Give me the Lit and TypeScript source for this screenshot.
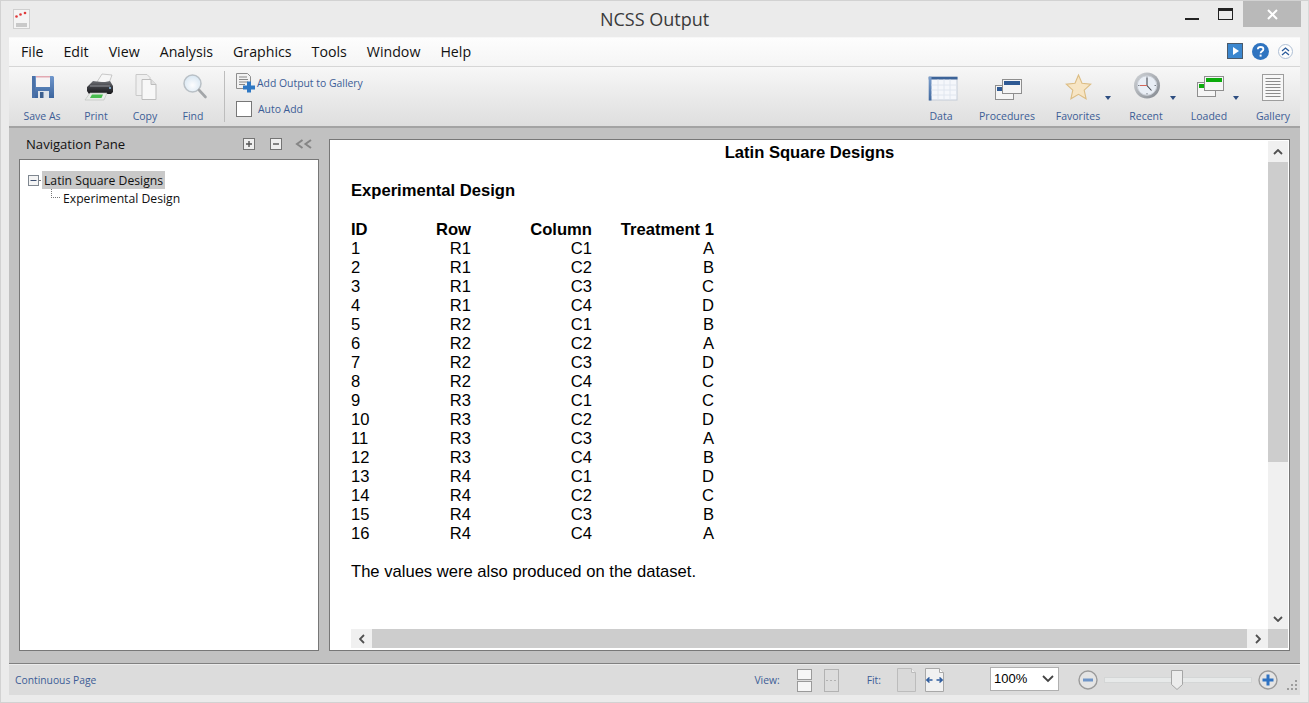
import { LitElement, css, html, svg } from "lit";
import { customElement } from "lit/decorators.js";

const MENUS = ["File", "Edit", "View", "Analysis", "Graphics", "Tools", "Window", "Help"];

const ROWS = [
  [1, "R1", "C1", "A"], [2, "R1", "C2", "B"], [3, "R1", "C3", "C"], [4, "R1", "C4", "D"],
  [5, "R2", "C1", "B"], [6, "R2", "C2", "A"], [7, "R2", "C3", "D"], [8, "R2", "C4", "C"],
  [9, "R3", "C1", "C"], [10, "R3", "C2", "D"], [11, "R3", "C3", "A"], [12, "R3", "C4", "B"],
  [13, "R4", "C1", "D"], [14, "R4", "C2", "C"], [15, "R4", "C3", "B"], [16, "R4", "C4", "A"],
];

const icons = {
  save: svg`<svg width="30" height="30" viewBox="0 0 30 30">
    <defs><linearGradient id="sv" x1="0" y1="0" x2="0" y2="1"><stop offset="0" stop-color="#7097cc"/><stop offset="1" stop-color="#3c659e"/></linearGradient></defs>
    <path d="M4 4h21l1 1v21H4z" fill="url(#sv)"/><path d="M4 4h3v22H4z" fill="#4a71a8"/>
    <rect x="8" y="4" width="14" height="11" fill="#f6f3f4"/><rect x="8" y="4" width="14" height="1.500" fill="#e2a9b2"/>
    <rect x="10" y="19" width="11" height="7" fill="#dfe4ea"/><rect x="12" y="20" width="3.500" height="6" fill="#3c5f8f"/>
  </svg>`,
  print: svg`<svg width="32" height="30" viewBox="0 0 32 30">
    <defs><linearGradient id="pr" x1="0" y1="0" x2="0" y2="1"><stop offset="0" stop-color="#6f7176"/><stop offset=".5" stop-color="#3a3b40"/><stop offset="1" stop-color="#17171a"/></linearGradient></defs>
    <path d="M14 10L19 2l10 1-3 8z" fill="#f6f6f6" stroke="#b5b5b5" stroke-width=".7"/>
    <path d="M4 15l6-6 8 1 4 0 5-1 3 5v6l-2 2H6l-2-3z" fill="url(#pr)"/>
    <path d="M7 14h20" stroke="#8f9197"/>
    <path d="M7 21h17l-3 7H2z" fill="#e9ece9" stroke="#b8bcb8" stroke-width=".6"/><path d="M9 22.500h11l-1.500 3.500H7z" fill="#49bd50"/>
    <circle cx="27" cy="16" r="1" fill="#8fc0e8"/>
  </svg>`,
  copy: svg`<svg width="26" height="30" viewBox="0 0 26 30">
    <path d="M2.500 2.500h11l3 3v18h-14z" fill="#efefef" stroke="#c9c9c9"/>
    <path d="M8.500 7.500h9l5 5v15h-14z" fill="#f7f7f7" stroke="#bdbdbd"/>
    <path d="M17.500 7.500v5h5" fill="#e0e0e0" stroke="#bdbdbd"/>
  </svg>`,
  find: svg`<svg width="28" height="30" viewBox="0 0 28 30">
    <defs><radialGradient id="fd" cx=".5" cy=".6" r=".6"><stop offset="0" stop-color="#fdfdfe"/><stop offset="1" stop-color="#d7e6f2"/></radialGradient></defs>
    <circle cx="12" cy="11" r="8.500" fill="url(#fd)" stroke="#b9c0c6" stroke-width="1.500"/>
    <path d="M18.500 17.500l6.500 7" stroke="#a3a6a9" stroke-width="2.600" stroke-linecap="round"/>
  </svg>`,
  addOutput: svg`<svg width="20" height="20" viewBox="0 0 20 20">
    <path d="M.5 .5h11l3 3v12H.5z" fill="#f2f2f2" stroke="#8d8d8d"/>
    <path d="M3 4h8M3 6.500h9M3 9h9M3 11.500h6" stroke="#888"/>
    <path d="M10 9h4v4h4v4h-4v3h-4v-3H6v-4h4z" fill="#2f78c4" transform="translate(1 -.5)"/>
  </svg>`,
  data: svg`<svg width="30" height="26" viewBox="0 0 30 26">
    <defs><linearGradient id="dt" x1="0" y1="0" x2="0" y2="1"><stop offset="0" stop-color="#7da0ce"/><stop offset="1" stop-color="#41699f"/></linearGradient></defs>
    <rect x=".5" y=".5" width="28" height="23" fill="#f5f7fb" stroke="#c4ccd8"/>
    <rect x="0" y="0" width="29" height="3" fill="#3c6398"/><rect x="0" y="0" width="3" height="24" fill="url(#dt)"/>
    <path d="M9.500 3v20M15.500 3v20M21.500 3v20M3 8.500h25M3 13.500h25M3 18.500h25" stroke="#e0e6ef"/>
  </svg>`,
  procedures: svg`<svg width="28" height="22" viewBox="0 0 28 22">
    <rect x=".5" y="6.500" width="18" height="14" fill="#f5f5f5" stroke="#8e8e8e"/><rect x="2" y="8" width="6" height="4" fill="#2f5a94"/>
    <rect x="7.500" y=".5" width="19" height="14" fill="#f5f5f5" stroke="#8e8e8e"/><rect x="9" y="2" width="16" height="4" fill="#2f5a94"/>
  </svg>`,
  loaded: svg`<svg width="28" height="22" viewBox="0 0 28 22">
    <rect x=".5" y="6.500" width="18" height="14" fill="#f5f5f5" stroke="#8e8e8e"/><rect x="2" y="8" width="6" height="4" fill="#0cab0c"/>
    <rect x="7.500" y=".5" width="19" height="14" fill="#f5f5f5" stroke="#8e8e8e"/><rect x="9" y="2" width="16" height="4" fill="#0cab0c"/>
  </svg>`,
  star: svg`<svg width="28" height="27" viewBox="0 0 28 27">
    <path d="M14 1.500l3.500 8.300 8.700.9-6.500 5.900 1.900 8.700L14 20.800l-7.600 4.500 1.900-8.700-6.500-5.900 8.700-.9z" fill="#f7e5c4" stroke="#dcbd84" stroke-width="1.100"/>
  </svg>`,
  clock: svg`<svg width="28" height="28" viewBox="0 0 28 28">
    <defs><linearGradient id="ck" x1="0" y1="0" x2="1" y2="1"><stop offset="0" stop-color="#d3d6da"/><stop offset="1" stop-color="#81868d"/></linearGradient></defs>
    <circle cx="14" cy="14" r="13" fill="url(#ck)"/><circle cx="14" cy="14" r="9.800" fill="#e9eef5" stroke="#c9ced6"/>
    <path d="M14 6.500V14l4.500 5" fill="none" stroke="#454a52" stroke-width="1.100"/><path d="M14 14H7" stroke="#d2675a"/>
    <path d="M14 5v1.500M14 21.500V23M5 14h1.500M21.500 14H23" stroke="#7b8089"/>
  </svg>`,
  gallery: svg`<svg width="22" height="27" viewBox="0 0 22 27">
    <rect x=".5" y=".5" width="21" height="26" fill="#f7f7f7" stroke="#9d9d9d"/>
    <path d="M3.500 4.500h15M3.500 7.500h15M3.500 10.500h15M3.500 13.500h15M3.500 16.500h15M3.500 19.500h15M3.500 22.500h15" stroke="#8b8b8b"/>
  </svg>`,
  arrow: svg`<svg width="6" height="4" viewBox="0 0 6 4"><path d="M0 0h6L3 4z" fill="#2d4d80"/></svg>`,
  app: svg`<svg width="17" height="20" viewBox="0 0 17 20">
    <rect x=".5" y=".5" width="16" height="19" fill="#f4f4f4" stroke="#cfcfcf"/>
    <rect x="3" y="14" width="11" height="4" fill="#c9c9c9"/>
    <circle cx="3.500" cy="7.500" r="1.300" fill="#e03a3a"/><circle cx="7.500" cy="5.500" r="1.300" fill="#e03a3a"/><circle cx="12" cy="4" r="1.300" fill="#e03a3a"/>
  </svg>`,
  play: svg`<svg width="16" height="16" viewBox="0 0 16 16">
    <rect x=".5" y=".5" width="15" height="15" fill="#3b87cf" stroke="#4b5a6a"/><path d="M6 4l6 4-6 4z" fill="#fff"/>
  </svg>`,
  help: svg`<svg width="17" height="17" viewBox="0 0 17 17">
    <circle cx="8.500" cy="8.500" r="8.500" fill="#2f74c0"/>
    <path d="M5.800 6.300c.2-3.100 5.600-3.100 5.600 0 0 2-2.800 2-2.800 4" fill="none" stroke="#fff" stroke-width="1.800"/>
    <rect x="7.600" y="11.600" width="2" height="2" fill="#fff"/>
  </svg>`,
  collapse: svg`<svg width="15" height="15" viewBox="0 0 15 15">
    <circle cx="7.500" cy="7.500" r="7" fill="#fdfdfd" stroke="#aebfd4"/>
    <path d="M4 7l3.500-3L11 7M4 11l3.500-3L11 11" fill="none" stroke="#2c5c9c" stroke-width="1.300"/>
  </svg>`,
  plusBox: svg`<svg width="12" height="12" viewBox="0 0 12 12">
    <rect x=".5" y=".5" width="11" height="11" fill="#efefef" stroke="#747474"/><path d="M3 6h6M6 3v6" stroke="#555" stroke-width="1.400"/>
  </svg>`,
  minusBox: svg`<svg width="12" height="12" viewBox="0 0 12 12">
    <rect x=".5" y=".5" width="11" height="11" fill="#efefef" stroke="#747474"/><path d="M3 6h6" stroke="#555" stroke-width="1.400"/>
  </svg>`,
  back: svg`<svg width="18" height="10" viewBox="0 0 18 10">
    <path d="M7.500 1L2 5l5.500 4M16 1l-5.500 4 5.500 4" fill="none" stroke="#858585" stroke-width="2"/>
  </svg>`,
  treeMinus: svg`<svg width="11" height="11" viewBox="0 0 11 11">
    <rect x=".5" y=".5" width="10" height="10" fill="#f4f4f4" stroke="#7f8790"/><path d="M2.500 5.500h6" stroke="#3d4f70"/>
  </svg>`,
  up: svg`<svg width="10" height="6" viewBox="0 0 10 6"><path d="M1 5l4-4 4 4" fill="none" stroke="#505050" stroke-width="1.800"/></svg>`,
  down: svg`<svg width="10" height="6" viewBox="0 0 10 6"><path d="M1 1l4 4 4-4" fill="none" stroke="#505050" stroke-width="1.800"/></svg>`,
  left: svg`<svg width="6" height="10" viewBox="0 0 6 10"><path d="M5 1L1 5l4 4" fill="none" stroke="#505050" stroke-width="1.800"/></svg>`,
  right: svg`<svg width="6" height="10" viewBox="0 0 6 10"><path d="M1 1l4 4-4 4" fill="none" stroke="#505050" stroke-width="1.800"/></svg>`,
  viewStack: svg`<svg width="15" height="23" viewBox="0 0 15 23">
    <rect x=".5" y=".5" width="14" height="10" fill="#f6f6f6" stroke="#9a9a9a"/><rect x=".5" y="12.500" width="14" height="10" fill="#f6f6f6" stroke="#9a9a9a"/>
  </svg>`,
  viewCont: svg`<svg width="15" height="23" viewBox="0 0 15 23">
    <rect x=".5" y=".5" width="14" height="22" fill="#dcdcdc" stroke="#b2b2b2"/><path d="M2 11.500h11" stroke="#b2b2b2" stroke-dasharray="2 2"/>
  </svg>`,
  fitPage: svg`<svg width="19" height="24" viewBox="0 0 19 24">
    <path d="M.5 .5h14l4 4v19H.5z" fill="#d9d9d9" stroke="#bcbcbc"/><path d="M14.500 .5v4h4" fill="#efefef" stroke="#bcbcbc"/>
  </svg>`,
  fitWidth: svg`<svg width="19" height="24" viewBox="0 0 19 24">
    <path d="M.5 .5h14l4 4v19H.5z" fill="#f1f1f1" stroke="#a8a8a8"/><path d="M14.500 .5v4h4" fill="#fafafa" stroke="#a8a8a8"/>
    <path d="M1.500 12h6M4.500 9.500L1.800 12l2.700 2.500M17.500 12h-6M14.500 9.500l2.700 2.500-2.700 2.500" fill="none" stroke="#2e5c9e" stroke-width="1.500"/>
  </svg>`,
  zoomOut: svg`<svg width="20" height="20" viewBox="0 0 20 20">
    <circle cx="10" cy="10" r="9" fill="#e4e4e4" stroke="#9b9b9b" stroke-width="1.400"/><rect x="5" y="8.500" width="10" height="3" fill="#6f95c8"/>
  </svg>`,
  zoomIn: svg`<svg width="20" height="20" viewBox="0 0 20 20">
    <circle cx="10" cy="10" r="9" fill="#e4e4e4" stroke="#9b9b9b" stroke-width="1.400"/><path d="M4.500 8.500h4v-4h3v4h4v3h-4v4h-3v-4h-4z" fill="#2f72c2"/>
  </svg>`,
  thumb: svg`<svg width="12" height="20" viewBox="0 0 12 20">
    <path d="M.5 .5h11v14L6 19.500.5 14.500z" fill="#ececec" stroke="#a5a5a5"/>
  </svg>`,
  chevron: svg`<svg width="12" height="8" viewBox="0 0 12 8"><path d="M1 1l5 5 5-5" fill="none" stroke="#444" stroke-width="1.800"/></svg>`,
  grip: svg`<svg width="10" height="10" viewBox="0 0 10 10">
    <path d="M8 0h2v2H8zM4 4h2v2H4zM8 4h2v2H8zM0 8h2v2H0zM4 8h2v2H4zM8 8h2v2H8z" fill="#9c9c9c"/>
  </svg>`,
};

type Tool = { label: string; icon: unknown; width: number; dx: number; dy: number; menu?: number };

const LEFT_TOOLS: Tool[] = [
  { label: "Save As", icon: icons.save, width: 54, dx: 1, dy: -1 },
  { label: "Print", icon: icons.print, width: 54, dx: 3, dy: -1 },
  { label: "Copy", icon: icons.copy, width: 44, dx: 1.500, dy: -1 },
  { label: "Find", icon: icons.find, width: 52, dx: 1.500, dy: -.500 },
];

const RIGHT_TOOLS: Tool[] = [
  { label: "Data", icon: icons.data, width: 50, dx: 2.500, dy: 1.500 },
  { label: "Procedures", icon: icons.procedures, width: 82, dx: 2, dy: 2 },
  { label: "Favorites", icon: icons.star, width: 60, dx: .500, dy: -1.500, menu: -3 },
  { label: "Recent", icon: icons.clock, width: 76, dx: 1, dy: -2.500, menu: 8 },
  { label: "Loaded", icon: icons.loaded, width: 50, dx: 2, dy: -1, menu: -5 },
  { label: "Gallery", icon: icons.gallery, width: 46, dx: 0, dy: -1 },
];

@customElement("app-root")
export class AppRoot extends LitElement {
  static styles = css`
    :host {
      display: block;
      width: 1309px;
      height: 703px;
      overflow: hidden;
      font-family: "Open Sans", "Noto Sans", sans-serif;
    }
    .win {
      box-sizing: border-box;
      height: 703px;
      display: flex;
      flex-direction: column;
      background: #ebebeb;
      border: 1px solid #d2d2d2;
      border-right-color: #d8d8d8;
      padding: 0 8px 7px 8px;
    }
    svg {
      display: block;
    }
    .titlebar {
      height: 36px;
      flex: none;
      position: relative;
      display: flex;
      align-items: center;
      justify-content: center;
      font-size: 18px;
      color: #3a3a3a;
      box-sizing: border-box;
    }
    .app-icon {
      position: absolute;
      left: 4px;
      top: 8px;
    }
    .win-btns {
      position: absolute;
      right: -1px;
      top: 0;
      display: flex;
      align-items: flex-start;
    }
    .min {
      width: 14px;
      height: 2px;
      background: #222;
      margin: 17px 19px 0 0;
    }
    .max {
      box-sizing: border-box;
      width: 15px;
      height: 12px;
      border: 1px solid #222;
      border-top-width: 3px;
      margin: 7px 10px 0 0;
    }
    .close {
      width: 58px;
      height: 26px;
      background: #b9b9b9;
      color: #fff;
      display: flex;
      align-items: center;
      justify-content: center;
    }
    .menubar {
      flex: none;
      height: 30px;
      box-sizing: border-box;
      display: flex;
      align-items: center;
      gap: 20px;
      padding: 0 0 2px 12px;
      background: linear-gradient(#fdfdfd, #f5f5f5);
      border-top: 1px solid #f7f7f7;
      border-bottom: 1px solid #d6d6d6;
      font-size: 14.200px;
      color: #111;
    }
    .menu-icons {
      margin-left: auto;
      margin-right: 7px;
      display: flex;
      align-items: center;
      gap: 9px;
    }
    .toolbar {
      flex: none;
      height: 61px;
      box-sizing: border-box;
      display: flex;
      padding: 0 4px 0 6px;
      background: linear-gradient(#f7f7f7, #dedede);
      border-bottom: 2px solid #a3a3a3;
    }
    .tool {
      position: relative;
      height: 59px;
      display: flex;
      flex-direction: column;
      align-items: center;
      font-size: 10.500px;
      color: #3c5d96;
      white-space: nowrap;
    }
    .tool-icon {
      height: 42px;
      display: flex;
      align-items: center;
      justify-content: center;
    }
    .tool-label {
      line-height: 14px;
    }
    .tool-menu {
      position: absolute;
      top: 29px;
    }
    .sep {
      width: 1px;
      height: 51px;
      margin: 4px 11px 0 5px;
      background: #bdbdbd;
    }
    .add-col {
      font-size: 10.400px;
      color: #3c5d96;
      display: flex;
      flex-direction: column;
      gap: 6px;
      padding-top: 6px;
    }
    .add-row {
      display: flex;
      align-items: center;
      gap: 1px;
      height: 20px;
    }
    .check {
      box-sizing: border-box;
      width: 16px;
      height: 16px;
      background: #fff;
      border: 1px solid #777;
      margin-right: 5px;
    }
    .tools-right {
      margin-left: auto;
      display: flex;
    }
    .gallery-gap {
      width: 16px;
    }
    .main {
      flex: 1;
      min-height: 0;
      display: flex;
      gap: 10px;
      padding: 11px 10px 12px 10px;
      background: #c1c1c1;
      border-bottom: 1px solid #808080;
    }
    .nav {
      width: 300px;
      flex: none;
      display: flex;
      flex-direction: column;
    }
    .nav-head {
      height: 20px;
      flex: none;
      box-sizing: border-box;
      display: flex;
      align-items: center;
      font-size: 13.100px;
      color: #111;
      padding: 0 6px 10px 7px;
      gap: 15px;
    }
    .nav-title {
      margin-right: auto;
    }
    .nav-back {
      margin-left: -2px;
    }
    .tree {
      flex: 1;
      box-sizing: border-box;
      background: #fff;
      border: 1px solid #777;
      padding: 11px 0 0 8px;
      font-size: 12.200px;
      color: #111;
    }
    .tree-root {
      display: flex;
      align-items: center;
      height: 18px;
    }
    .tree-dots {
      width: 4px;
      border-top: 1px dotted #777;
    }
    .tree-sel {
      background: #c9c9c9;
      height: 18px;
      line-height: 20px;
      padding: 0 2px;
      margin-left: -1px;
    }
    .tree-child {
      display: flex;
      align-items: center;
      height: 18px;
      padding-left: 23px;
    }
    .tree-elbow {
      box-sizing: border-box;
      width: 9px;
      height: 9px;
      margin: -9px 3px 0 0;
      border-left: 1px dotted #777;
      border-bottom: 1px dotted #777;
    }
    .doc {
      flex: 1;
      min-width: 0;
      box-sizing: border-box;
      background: #fff;
      border: 1px solid #777;
      display: grid;
      grid-template-columns: 1fr 21px;
      grid-template-rows: 1fr 19px;
      padding-bottom: 2px;
      font-family: "Liberation Sans", Arial, sans-serif;
      font-size: 16.600px;
      color: #000;
    }
    .page {
      min-height: 0;
      padding: 1px 0 0 21px;
      line-height: 19px;
    }
    .doc-title {
      font-weight: bold;
      text-align: center;
      padding: 2px 0 0 0;
      height: 19px;
    }
    .doc-head {
      font-weight: bold;
      margin-top: 19px;
      height: 19px;
    }
    .grid {
      margin-top: 20px;
      display: grid;
      grid-template-columns: 50px 70px 121px 122px;
      justify-content: start;
    }
    .grid .r {
      text-align: right;
    }
    .grid .b {
      font-weight: bold;
    }
    .note {
      margin-top: 19px;
    }
    .vbar {
      margin-top: 1px;
      width: 20px;
      display: flex;
      flex-direction: column;
      background: #f0f0f0;
    }
    .sb-btn {
      flex: none;
      background: #f0f0f0;
      display: flex;
      align-items: center;
      justify-content: center;
    }
    .vbar .sb-btn {
      height: 21px;
    }
    .vthumb {
      height: 300px;
      flex: none;
      background: #cdcdcd;
    }
    .vspace {
      flex: 1;
    }
    .hbar {
      margin-left: 21px;
      display: flex;
      background: #cdcdcd;
    }
    .hbar .sb-btn {
      width: 21px;
    }
    .hthumb {
      flex: 1;
    }
    .corner {
      width: 20px;
      background: #cdcdcd;
    }
    .status {
      flex: none;
      height: 30px;
      display: flex;
      align-items: center;
      background: #dcdcdc;
      font-size: 10.300px;
      color: #3c5d96;
      padding: 0 3px 0 6px;
      margin-top: 1px;
    }
    .status-right {
      margin-left: auto;
      display: flex;
      align-items: center;
    }
    .view-label {
      margin-right: 17px;
    }
    .view-gap {
      width: 12px;
    }
    .fit-label {
      margin: 0 16px 0 28px;
    }
    .fit-gap {
      width: 9px;
    }
    .combo {
      box-sizing: border-box;
      width: 69px;
      height: 24px;
      margin: 0 19px 3px 46px;
      background: #fff;
      border: 1px solid #b0b0b0;
      display: flex;
      align-items: center;
      justify-content: space-between;
      padding: 0 4px 0 3px;
      font-family: "Liberation Sans", Arial, sans-serif;
      font-size: 13px;
      color: #000;
    }
    .slider {
      position: relative;
      width: 148px;
      height: 6px;
      margin: 0 6px;
      background: #e7e9e9;
      border: 1px solid #d4d6d6;
      box-sizing: border-box;
    }
    .slider-thumb {
      position: absolute;
      left: 66px;
      top: -8px;
    }
    .grip {
      margin: 10px 0 4px 9px;
      align-self: flex-end;
    }
  `;

  private renderTool(t: Tool) {
    return html`<div class="tool" style="width:${t.width}px">
      <div class="tool-icon" style="transform:translate(${t.dx}px,${t.dy}px)">${t.icon}</div>
      <div class="tool-label">${t.label}</div>
      ${t.menu !== undefined
        ? html`<div class="tool-menu" style="right:${t.menu}px">${icons.arrow}</div>`
        : null}
    </div>`;
  }

  render() {
    return html`
      <div class="win">
        <div class="titlebar">
          <div class="app-icon">${icons.app}</div>
          NCSS Output
          <div class="win-btns">
            <div class="min"></div>
            <div class="max"></div>
            <div class="close">
              <svg width="11" height="11" viewBox="0 0 11 11"><path d="M1 1l9 9M10 1l-9 9" stroke="#fff" stroke-width="2"/></svg>
            </div>
          </div>
        </div>

        <div class="menubar">
          ${MENUS.map((m) => html`<span>${m}</span>`)}
          <div class="menu-icons">${icons.play}${icons.help}${icons.collapse}</div>
        </div>

        <div class="toolbar">
          ${LEFT_TOOLS.map((t) => this.renderTool(t))}
          <div class="sep"></div>
          <div class="add-col">
            <div class="add-row">${icons.addOutput}<span>Add Output to Gallery</span></div>
            <div class="add-row"><div class="check"></div><span>Auto Add</span></div>
          </div>
          <div class="tools-right">
            ${RIGHT_TOOLS.slice(0, 5).map((t) => this.renderTool(t))}
            <div class="gallery-gap"></div>
            ${this.renderTool(RIGHT_TOOLS[5])}
          </div>
        </div>

        <div class="main">
          <div class="nav">
            <div class="nav-head">
              <span class="nav-title">Navigation Pane</span>
              ${icons.plusBox}${icons.minusBox}
              <span class="nav-back">${icons.back}</span>
            </div>
            <div class="tree">
              <div class="tree-root">
                ${icons.treeMinus}<span class="tree-dots"></span>
                <span class="tree-sel">Latin Square Designs</span>
              </div>
              <div class="tree-child"><span class="tree-elbow"></span>Experimental Design</div>
            </div>
          </div>

          <div class="doc">
            <div class="page">
              <div class="doc-title">Latin Square Designs</div>
              <div class="doc-head">Experimental Design</div>
              <div class="grid">
                <div class="b">ID</div>
                <div class="b r">Row</div>
                <div class="b r">Column</div>
                <div class="b r">Treatment 1</div>
                ${ROWS.map(
                  (r) => html`<div>${r[0]}</div>
                    <div class="r">${r[1]}</div>
                    <div class="r">${r[2]}</div>
                    <div class="r">${r[3]}</div>`,
                )}
              </div>
              <div class="note">The values were also produced on the dataset.</div>
            </div>
            <div class="vbar">
              <div class="sb-btn">${icons.up}</div>
              <div class="vthumb"></div>
              <div class="vspace"></div>
              <div class="sb-btn">${icons.down}</div>
            </div>
            <div class="hbar">
              <div class="sb-btn">${icons.left}</div>
              <div class="hthumb"></div>
              <div class="sb-btn">${icons.right}</div>
            </div>
            <div class="corner"></div>
          </div>
        </div>

        <div class="status">
          <span>Continuous Page</span>
          <div class="status-right">
            <span class="view-label">View:</span>
            ${icons.viewStack}
            <span class="view-gap"></span>
            ${icons.viewCont}
            <span class="fit-label">Fit:</span>
            ${icons.fitPage}
            <span class="fit-gap"></span>
            ${icons.fitWidth}
            <div class="combo"><span>100%</span>${icons.chevron}</div>
            ${icons.zoomOut}
            <div class="slider"><div class="slider-thumb">${icons.thumb}</div></div>
            ${icons.zoomIn}
            <div class="grip">${icons.grip}</div>
          </div>
        </div>
      </div>
    `;
  }
}
